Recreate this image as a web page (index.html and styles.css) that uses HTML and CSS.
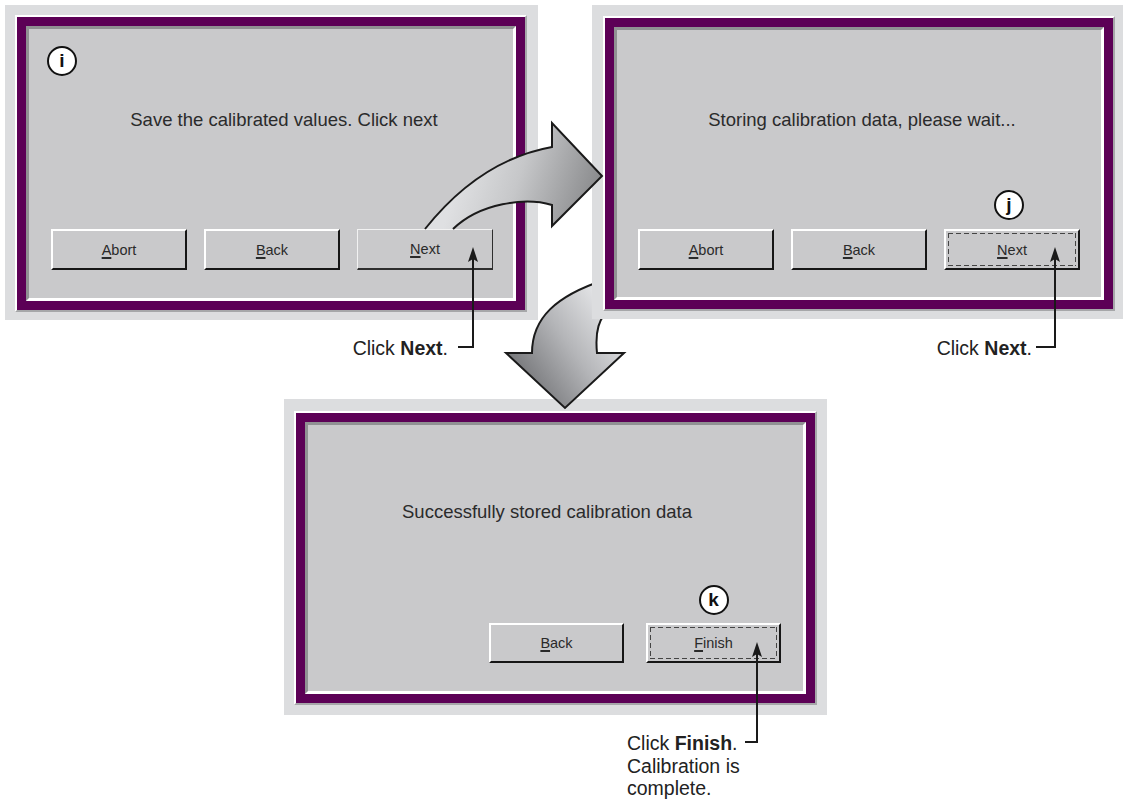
FILE: index.html
```html
<!DOCTYPE HTML>
<html>
<head>
<meta charset="utf-8" />
<title>Calibration wizard</title>
<link rel="stylesheet" href="styles.css">
</head>
<body>
<div class="page">
	<div class="row-top">
		<div class="shot shot-one">
			<div class="win">
				<div class="screen">
					<span class="mark mark-i">i</span>
					<p class="msg msg-one">Save the calibrated values. Click next</p>
					<div class="btns">
						<div class="btn"><u>A</u>bort</div>
						<div class="btn"><u>B</u>ack</div>
						<div class="btn btn-flat"><u>N</u>ext</div>
					</div>
				</div>
			</div>
		</div>
		<div class="shot shot-two">
			<div class="win">
				<div class="screen">
					<p class="msg msg-two">Storing calibration data, please wait...</p>
					<div class="btns btns-two">
						<div class="btn"><u>A</u>bort</div>
						<div class="btn"><u>B</u>ack</div>
						<div class="btn btn-focus"><span class="mark mark-j">j</span><u>N</u>ext</div>
					</div>
				</div>
			</div>
		</div>
	</div>
	<div class="shot shot-three">
		<div class="win">
			<div class="screen">
				<p class="msg msg-three">Successfully stored calibration data</p>
				<div class="btns btns-three">
					<div class="btn"><u>B</u>ack</div>
					<div class="btn btn-focus"><span class="mark mark-k">k</span><u>F</u>inish</div>
				</div>
			</div>
		</div>
	</div>

	<!-- arrow going down, sits under the second window -->
	<svg class="overlay overlay-under" width="1125" height="803" viewBox="0 0 1125 803">
		<defs>
			<linearGradient id="grad_down" gradientUnits="userSpaceOnUse" x1="515" y1="385" x2="615" y2="315">
				<stop offset="0" stop-color="#6c6d70"/>
				<stop offset="0.55" stop-color="#b4b5b8"/>
				<stop offset="1" stop-color="#e4e5e7"/>
			</linearGradient>
		</defs>
		<path d="M604 280 C556 296 532 318 532 353 L506 353 L565 408 L624 353 L597 353 C595 332 598 318 612 306 Z" fill="url(#grad_down)" stroke="#1a1a1a" stroke-width="2" stroke-linejoin="miter"/>
	</svg>

	<svg class="overlay overlay-top" width="1125" height="803" viewBox="0 0 1125 803">
		<defs>
			<linearGradient id="grad_right" gradientUnits="userSpaceOnUse" x1="465" y1="160" x2="600" y2="205">
				<stop offset="0" stop-color="#dfe0e2"/>
				<stop offset="0.4" stop-color="#c6c7c9"/>
				<stop offset="1" stop-color="#848587"/>
			</linearGradient>
		</defs>
		<path d="M552 147 L552 123 L602 176 L552 226 L552 205 C525 197 480 203 453 229 L425 229 Q480 160 552 147 Z" fill="url(#grad_right)"/>
		<path d="M425 229 Q480 160 552 147 L552 123 L602 176 L552 226 L552 205 C525 197 480 203 453 229" fill="none" stroke="#1a1a1a" stroke-width="2" stroke-linejoin="miter"/>

		<!-- callout leaders -->
		<path d="M473 258 V347 H458" fill="none" stroke="#1a1a1a" stroke-width="2"/>
		<path d="M473 247 L478 262 L473 259 L468 262 Z" fill="#1a1a1a"/>
		<path d="M1055 258 V347 H1036" fill="none" stroke="#1a1a1a" stroke-width="2"/>
		<path d="M1055 247 L1060 262 L1055 259 L1050 262 Z" fill="#1a1a1a"/>
		<path d="M757 653 V742 H745" fill="none" stroke="#1a1a1a" stroke-width="2"/>
		<path d="M757 642 L762 657 L757 654 L752 657 Z" fill="#1a1a1a"/>
	</svg>

	<div class="note note-one">Click <b>Next</b>.</div>
	<div class="note note-two">Click <b>Next</b>.</div>
	<div class="note note-three">Click <b>Finish</b>.<br>Calibration is<br>complete.</div>
</div>
</body>
</html>
```

FILE: styles.css
```css
*{ margin:0; padding:0; box-sizing:border-box;}
body{ background:#fff; font-family:"Liberation Sans", Arial, sans-serif; color:#2a2a2a;}
.page{ position:relative; width:1125px; height:803px; overflow:hidden;}

.row-top{ display:flex; align-items:flex-start; gap:54px; padding:5px 0 0 5px;}

.shot{ background:#dcdddf;}
.shot-one{ width:533px; height:315px; padding:10px 11px 8px 10px;}
.shot-two{ width:531px; height:314px; padding:11px 8px 8px 11px; position:relative; z-index:2;}
.shot-three{ width:543px; height:316px; padding:12px 10px 10px 10px; margin:79px 0 0 284px;}

.win{ height:100%; background:#5c0056; padding:9px; border:2px solid; border-color:#fff #a6a7a9 #a6a7a9 #fff;}
.screen{ position:relative; height:100%; display:flex; flex-direction:column; background:#c9c9cb; border:3px solid; border-color:#909193 #fff #fff #909193;}

.msg{ font-size:18.5px; line-height:22px; text-align:center; color:#2b2b2b;}
.msg-one{ padding:80px 0 0 26px;}
.msg-two{ padding:79px 0 0 6px;}
.msg-three{ padding:76px 17px 0 0;}

.btns{ margin-top:auto; display:flex; justify-content:flex-end; gap:17px; padding:0 20px 28px;}
.btns-two{ padding:0 21px 27px;}
.btns-three{ gap:22px; padding:0 22px 28px;}

.btn{ position:relative; width:136px; height:41px; display:flex; align-items:center; justify-content:center; font-size:14.5px; color:#2a2a2a; background:#c9c9cb; border:2px solid; border-color:#fff #161616 #161616 #fff;}
.btns-three .btn{ width:135px; height:40px;}
.btn u{ text-decoration-thickness:2px; text-underline-offset:2px;}
.btn-flat{ border-width:1px 1px 2px 1px; border-color:#f2f2f2 #2e2e2e #2e2e2e #f2f2f2;}
.btn-focus::after{ content:""; position:absolute; inset:2px;
	background:
		repeating-linear-gradient(90deg, #444 0 5px, transparent 5px 8px) top left / 100% 1px no-repeat,
		repeating-linear-gradient(90deg, #444 0 5px, transparent 5px 8px) bottom left / 100% 1px no-repeat,
		repeating-linear-gradient(180deg, #444 0 5px, transparent 5px 8px) top left / 1px 100% no-repeat,
		repeating-linear-gradient(180deg, #444 0 5px, transparent 5px 8px) top right / 1px 100% no-repeat;}

.mark{ position:absolute; width:30px; height:30px; border:2px solid #111; border-radius:50%; background:#fff; display:flex; align-items:center; justify-content:center; font-weight:bold; font-size:19px; color:#111;}
.mark-i{ left:18px; top:17px;}
.mark-j{ left:50%; margin-left:-18px; bottom:calc(100% + 11px);}
.mark-k{ left:50%; margin-left:-15px; bottom:calc(100% + 10px);}

.overlay{ position:absolute; left:0; top:0;}
.overlay-under{ z-index:1;}
.overlay-top{ z-index:3;}

.note{ position:absolute; z-index:3; font-size:19.5px; line-height:22.5px; color:#222; white-space:nowrap;}
.note-one{ top:337px; right:677px;}
.note-two{ top:337px; right:93px;}
.note-three{ top:732px; left:627px;}
```
